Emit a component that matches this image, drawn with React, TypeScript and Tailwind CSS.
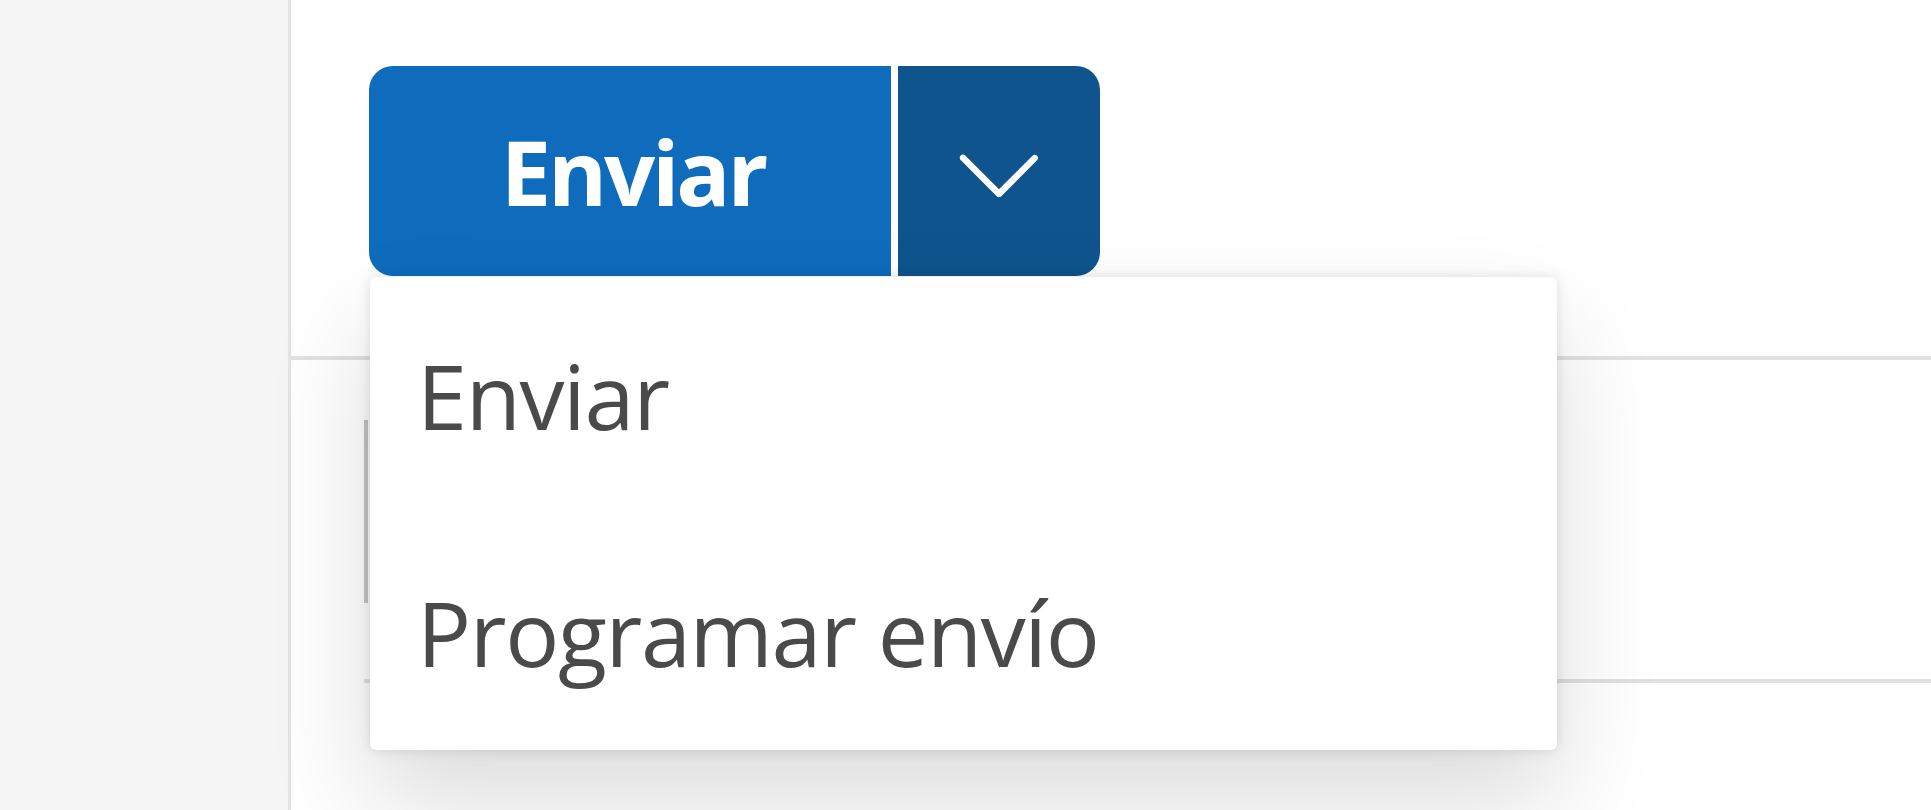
import { useState } from "react";

const MENU_ITEMS = ["Enviar", "Programar envío"];

function ChevronDown() {
  return (
    <svg width="130" height="130" viewBox="0 0 20 20" fill="#ffffff">
      <path d="M15.85 7.65c.2.2.2.5 0 .7l-5.46 5.49a.55.55 0 0 1-.78 0L4.15 8.35a.5.5 0 1 1 .7-.7L10 12.8l5.15-5.16c.2-.2.5-.2.7 0Z" />
    </svg>
  );
}

export default function App() {
  const [open, setOpen] = useState(true);

  return (
    <div
      className="flex h-[810px] w-full overflow-hidden bg-white"
      style={{ fontFamily: '"Open Sans", "Noto Sans", sans-serif' }}
    >
      <div className="w-[291px] shrink-0 bg-[#f5f5f5] border-r-[3px] border-[#e3e3e3]" />

      <div className="flex-1 flex flex-col">
        <div className="h-[360px] shrink-0 border-b-[4px] border-[#e1e1e1] pt-[66px] pl-[78px]">
          <div className="relative inline-flex">
            <button className="w-[522px] h-[210px] rounded-l-[24px] bg-[#0f6cbd] text-white text-[90px] font-bold tracking-[-0.035em] leading-none flex items-center justify-center pl-[6px]">
              Enviar
            </button>
            <div className="w-[7px] h-[210px] bg-white" />
            <button
              onClick={() => setOpen(!open)}
              className="w-[202px] h-[210px] rounded-r-[24px] bg-[#0f548c] flex items-center justify-center"
            >
              <ChevronDown />
            </button>

            {open && (
              <div className="absolute left-[1px] top-[211px] z-10 w-[1187px] h-[473px] bg-white rounded-[6px] shadow-[0_0_13px_rgba(0,0,0,0.12),0_52px_104px_rgba(0,0,0,0.14)] flex flex-col">
                {MENU_ITEMS.map((item) => (
                  <div
                    key={item}
                    className="flex-1 flex items-center pl-[47px] text-[90px] text-[#4a4a4a] tracking-[-0.015em] leading-none"
                  >
                    {item}
                  </div>
                ))}
              </div>
            )}
          </div>
        </div>

        <div className="ml-[73px] h-[323px] shrink-0 border-b-[4px] border-[#e1e1e1]">
          <div className="w-[4px] h-[183px] mt-[60px] bg-[#c6c6c6]" />
        </div>
      </div>
    </div>
  );
}
